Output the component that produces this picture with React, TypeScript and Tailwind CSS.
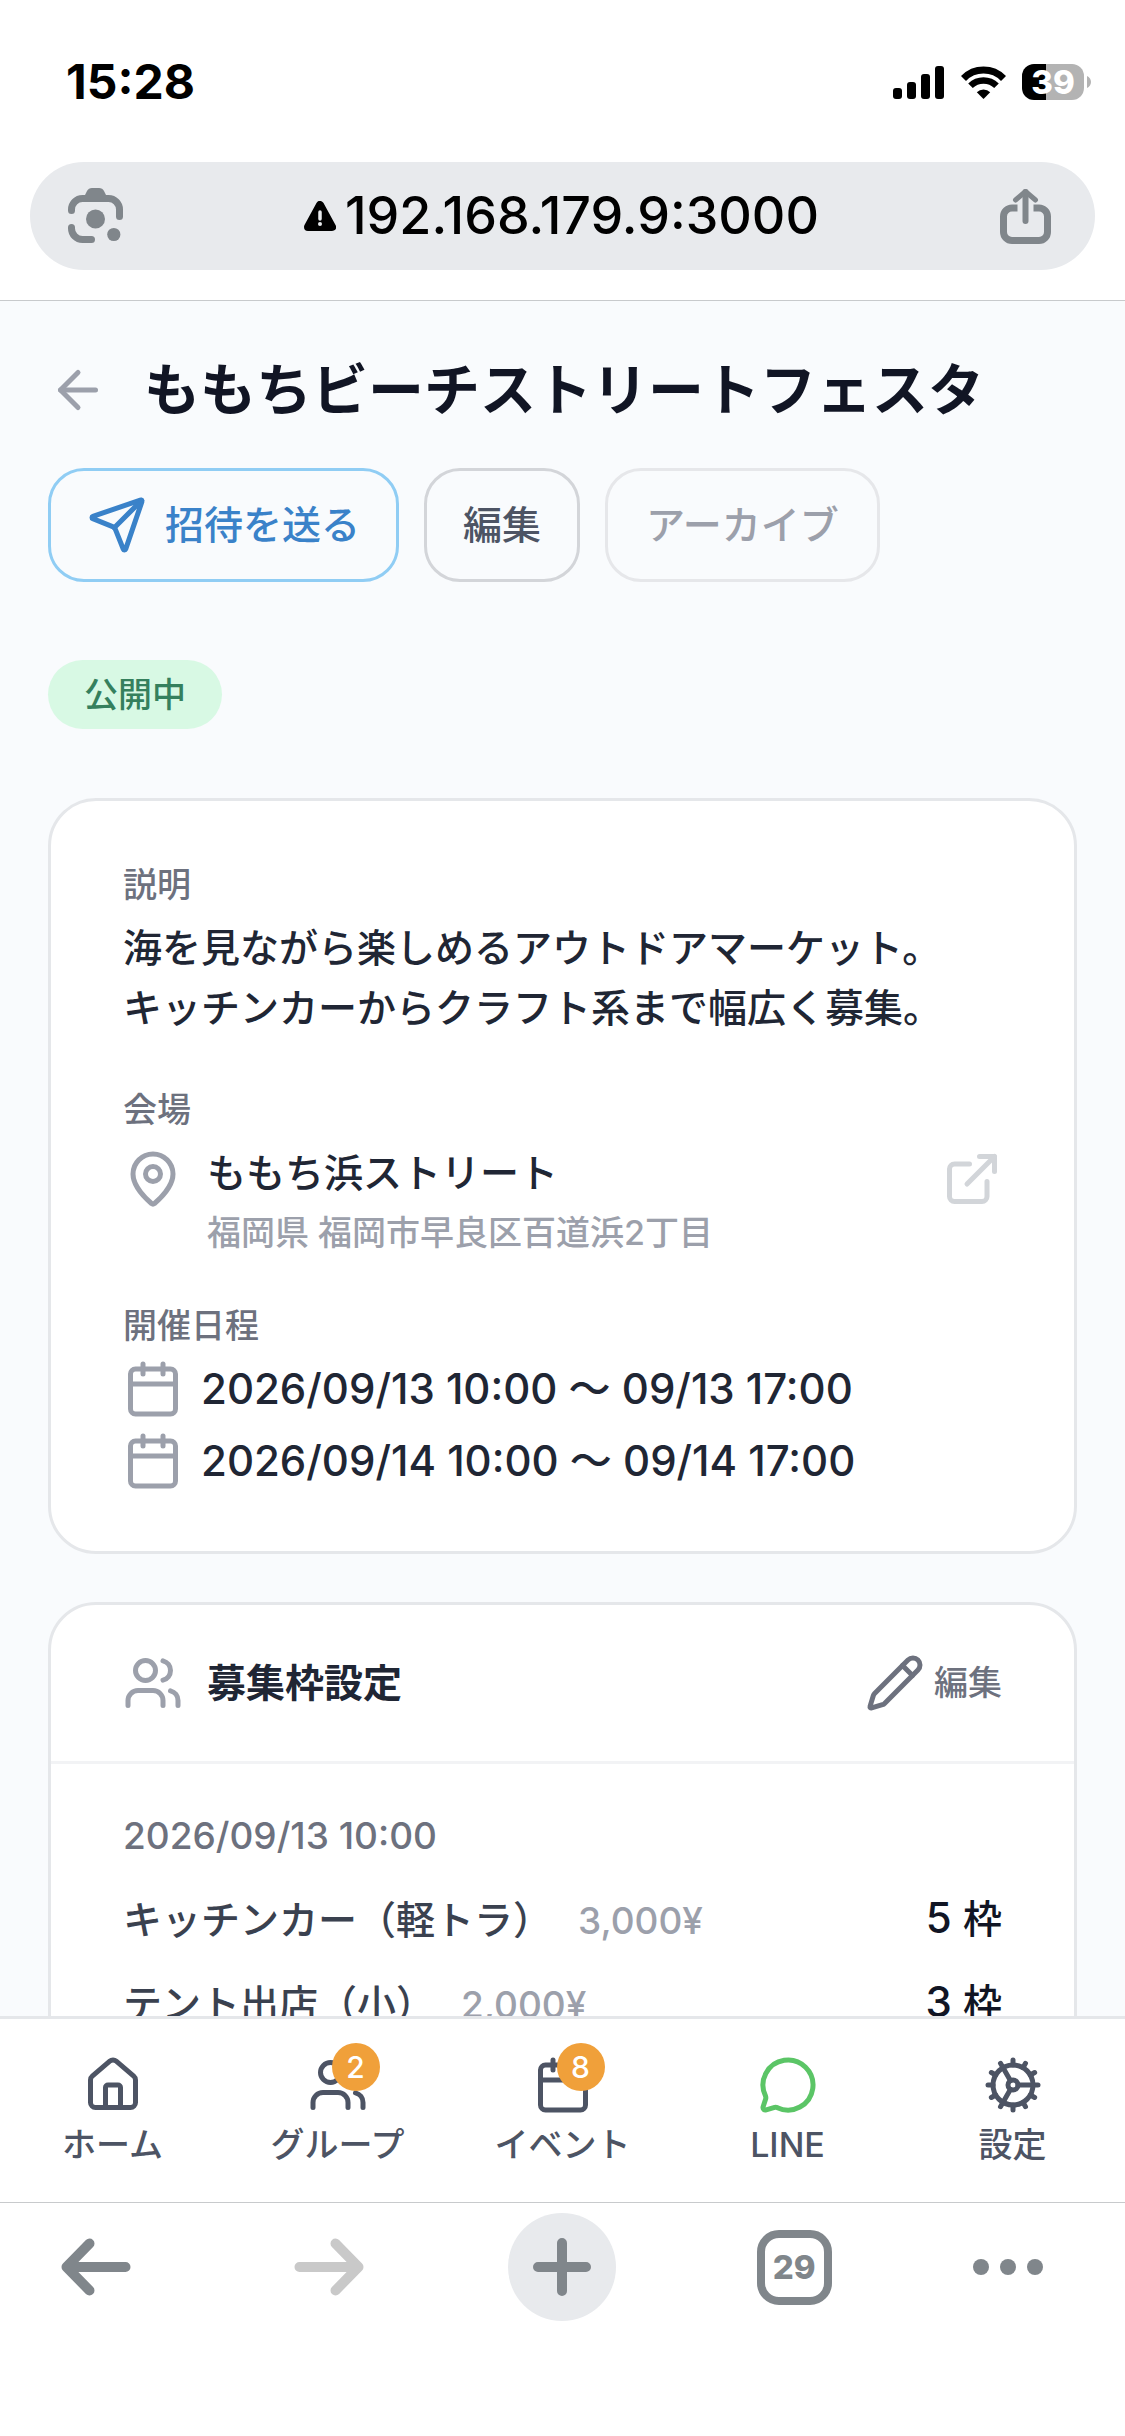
import { useState } from 'react';
import {
  ArrowLeft,
  Calendar,
  Cog,
  ExternalLink,
  House,
  MapPin,
  MessageCircle,
  Pencil,
  Send,
  Users,
  type LucideIcon,
} from 'lucide-react';

type NavItem = {
  id: string;
  label: string;
  icon: LucideIcon;
  badge?: number;
  iconClass?: string;
};

const NAV_ITEMS: NavItem[] = [
  { id: 'home', label: 'ホーム', icon: House },
  { id: 'groups', label: 'グループ', icon: Users, badge: 2 },
  { id: 'events', label: 'イベント', icon: Calendar, badge: 8 },
  { id: 'line', label: 'LINE', icon: MessageCircle, iconClass: 'text-[#5bc566]' },
  { id: 'settings', label: '設定', icon: Cog },
];

const SCHEDULES = ['2026/09/13 10:00 〜 09/13 17:00', '2026/09/14 10:00 〜 09/14 17:00'];

const SLOTS = [
  { name: 'キッチンカー（軽トラ）', price: '3,000¥', count: 5 },
  { name: 'テント出店（小）', price: '2,000¥', count: 3 },
];

function StatusBar() {
  return (
    <div className="flex h-[162px] items-center justify-between pt-[2px] pr-[34px] pl-[66px]">
      <span className="text-[48px] leading-[60px] font-bold">15:28</span>
      <div className="flex items-center">
        <svg className="h-[33px] w-[51px]" viewBox="0 0 51 33" fill="currentColor">
          <rect x="0" y="22" width="9" height="11" rx="3" />
          <rect x="14" y="16" width="9" height="17" rx="3" />
          <rect x="28" y="8" width="9" height="25" rx="3" />
          <rect x="42" y="0" width="9" height="33" rx="3" />
        </svg>
        <svg className="ml-[17px] h-[33px] w-[45px]" viewBox="0 0 45 33" fill="none" stroke="currentColor">
          <path d="M2.5 12.5A28 28 0 0 1 42.5 12.5" strokeWidth="7" />
          <path d="M9.5 19.8A18.5 18.5 0 0 1 35.5 19.8" strokeWidth="6.5" />
          <path d="M22.5 33L15.8 26.2A10 10 0 0 1 29.2 26.2Z" fill="currentColor" stroke="none" />
        </svg>
        <div className="ml-4 flex h-9 w-[62px] items-center justify-center rounded-[12px] bg-linear-to-r from-black from-39% to-[#b3b3b3] to-39% text-[33px] leading-9 font-extrabold text-white">
          39
        </div>
        <svg className="ml-[3px] h-3 w-1" viewBox="0 0 4 12" fill="#b3b3b3">
          <path d="M0 0c2.5 1 4 3.5 4 6s-1.5 5-4 6z" />
        </svg>
      </div>
    </div>
  );
}

function LensIcon() {
  return (
    <svg className="h-14 w-[55px]" viewBox="0 0 55 56" fill="none" stroke="currentColor" strokeWidth="7" strokeLinecap="round">
      <path d="M3.5 22.5v-1A11 11 0 0 1 14.5 10.5H40.5A11 11 0 0 1 51.5 21.5V28.5" />
      <path d="M3.5 39.5v1A11 11 0 0 0 14.5 51.5H23.5" />
      <path d="M16 9L19 3Q20.5 0 24 0H31Q34.5 0 36 3L39 9Z" fill="currentColor" stroke="none" />
      <circle cx="27.5" cy="31" r="9.5" fill="currentColor" stroke="none" />
      <circle cx="45.8" cy="46.5" r="6.6" fill="currentColor" stroke="none" />
    </svg>
  );
}

function ShareIcon() {
  return (
    <svg className="h-14 w-[51px]" viewBox="0 0 51 56" fill="none" stroke="currentColor" strokeWidth="7">
      <path d="M17.5 20H12A8.5 8.5 0 0 0 3.5 28.5V44A8.5 8.5 0 0 0 12 52.5H39A8.5 8.5 0 0 0 47.5 44V28.5A8.5 8.5 0 0 0 39 20H33.5" />
      <path d="M25.5 4V33" strokeWidth="6" strokeLinecap="round" />
      <path d="M15.5 12L25.5 3.5L35.5 12" strokeWidth="5" strokeLinecap="round" strokeLinejoin="round" />
    </svg>
  );
}

function AddressBar() {
  return (
    <div className="mx-[30px] mb-[30px] flex h-[108px] items-center justify-between rounded-full bg-[#e8eaed] pr-11 pl-[38px]">
      <button type="button" aria-label="画像検索" className="text-[#80868b]">
        <LensIcon />
      </button>
      <button type="button" className="flex items-center gap-[9px] text-[52px] leading-[60px] font-medium">
        <svg className="h-[30px] w-8" viewBox="0 0 32 30">
          <path d="M16 4L28 26H4Z" fill="#000" stroke="#000" strokeWidth="8" strokeLinejoin="round" />
          <path d="M16 11v7" stroke="#e8eaed" strokeWidth="3.5" strokeLinecap="round" />
          <circle cx="16" cy="23" r="2" fill="#e8eaed" />
        </svg>
        192.168.179.9:3000
      </button>
      <button type="button" aria-label="共有" className="text-[#80868b]">
        <ShareIcon />
      </button>
    </div>
  );
}

function EventHeader() {
  return (
    <>
      <div className="flex items-center gap-9">
        <button type="button" aria-label="戻る" className="text-[#9ca0ab]">
          <ArrowLeft size={60} />
        </button>
        <h1 className="text-[56px] leading-[80px] font-bold whitespace-nowrap text-[#111524]">
          ももちビーチストリートフェスタ
        </h1>
      </div>
      <div className="mt-[38px] flex gap-[25px] text-[39px] leading-[60px] font-medium">
        <button
          type="button"
          className="flex h-[114px] items-center gap-[18px] rounded-[36px] border-3 border-[#90cdf4] px-9 text-[#3a82c9]"
        >
          <Send size={60} />
          招待を送る
        </button>
        <button type="button" className="h-[114px] rounded-[36px] border-3 border-[#d3d5d9] px-9 text-[#4d5464]">
          編集
        </button>
        <button type="button" className="h-[114px] rounded-[36px] border-3 border-[#e6e7ea] px-[38px] text-[#9ca0ab]">
          アーカイブ
        </button>
      </div>
    </>
  );
}

function SectionLabel({ children }: { children: string }) {
  return <h2 className="mb-[9px] text-[34px] leading-12 font-medium text-[#6d717e]">{children}</h2>;
}

function EventDetails() {
  return (
    <section className="mt-[69px] flex flex-col gap-12 rounded-[48px] border-3 border-[#e5e7ea] bg-white px-[72px] py-[60px] text-[39px] leading-[60px] font-medium text-[#202634]">
      <div>
        <SectionLabel>説明</SectionLabel>
        <p>
          海を見ながら楽しめるアウトドアマーケット。
          <br />
          キッチンカーからクラフト系まで幅広く募集。
        </p>
      </div>
      <div>
        <SectionLabel>会場</SectionLabel>
        <div className="flex items-start gap-6">
          <MapPin size={60} className="mt-[6px] shrink-0 text-[#9ca0ab]" />
          <div className="flex-1">
            <p>ももち浜ストリート</p>
            <p className="mt-[9px] text-[34px] leading-[42px] text-[#9ca0ab]">福岡県 福岡市早良区百道浜2丁目</p>
          </div>
          <a href="#map" aria-label="地図を開く" className="mt-[6px] text-[#d2d5d9]">
            <ExternalLink size={60} />
          </a>
        </div>
      </div>
      <div>
        <SectionLabel>開催日程</SectionLabel>
        <ul className="flex flex-col gap-3 text-[42px]">
          {SCHEDULES.map((schedule) => (
            <li key={schedule} className="flex items-center gap-[18px]">
              <Calendar size={60} className="text-[#9ca0ab]" />
              {schedule}
            </li>
          ))}
        </ul>
      </div>
    </section>
  );
}

function SlotSettings() {
  return (
    <section className="mt-12 rounded-[48px] border-3 border-[#e5e7ea] bg-white">
      <div className="flex items-center justify-between border-b-3 border-[#f2f3f5] px-[72px] py-12">
        <h2 className="flex items-center gap-6 text-[39px] leading-[60px] font-bold text-[#202634]">
          <Users size={60} className="text-[#9ca0ab]" />
          募集枠設定
        </h2>
        <button type="button" className="flex items-center gap-[9px] text-[34px] leading-[60px] font-medium text-[#6d717e]">
          <Pencil size={60} />
          編集
        </button>
      </div>
      <div className="px-[72px] py-12">
        <h3 className="text-[37px] leading-12 font-medium text-[#6d717e]">2026/09/13 10:00</h3>
        <ul className="mt-7 flex flex-col gap-6 font-medium">
          {SLOTS.map((slot) => (
            <li key={slot.name} className="flex h-[60px] items-start justify-between leading-[60px]">
              <p className="flex items-baseline gap-[26px] pt-[2px]">
                <span className="text-[39px] text-[#3a414f]">{slot.name}</span>
                <span className="text-[37px] text-[#9ca0ab]">{slot.price}</span>
              </p>
              <p className="text-[42px] text-[#111524]">
                {slot.count} <span className="text-[39px]">枠</span>
              </p>
            </li>
          ))}
        </ul>
      </div>
    </section>
  );
}

function BottomNav() {
  const [active, setActive] = useState('events');

  return (
    <nav className="grid grid-cols-5 border-t-3 border-[#e5e7ea] bg-white pt-9 pb-[33px]">
      {NAV_ITEMS.map(({ id, label, icon: Icon, badge, iconClass }) => (
        <button
          key={id}
          type="button"
          aria-current={active === id ? 'page' : undefined}
          onClick={() => setActive(id)}
          className="flex flex-col items-center gap-[6px] text-[34px] leading-12 font-medium text-[#4d5464]"
        >
          <span className="relative">
            <Icon size={60} className={iconClass} />
            {badge && (
              <span className="absolute -top-3 -right-3 flex size-12 items-center justify-center rounded-full bg-[#f0a03a] text-[30px] leading-none text-white">
                {badge}
              </span>
            )}
          </span>
          {label}
        </button>
      ))}
    </nav>
  );
}

function BrowserToolbar() {
  return (
    <footer className="flex h-[234px] items-start justify-between border-t border-[#c8cacc] bg-white pt-[10px] pr-[82px] pl-[42px] text-[#80868b]">
      <button type="button" aria-label="前のページ" className="flex h-[108px] w-[108px] items-center justify-center">
        <svg className="h-[58px] w-[70px]" viewBox="0 0 70 58" fill="none" stroke="currentColor" strokeWidth="10" strokeLinecap="round" strokeLinejoin="round">
          <path d="M64.5 29H7M28.5 5.5L5.5 29L28.5 52.5" />
        </svg>
      </button>
      <button type="button" aria-label="次のページ" className="flex h-[108px] w-[108px] items-center justify-center text-[#c9c9c9]">
        <svg className="h-[58px] w-[70px]" viewBox="0 0 70 58" fill="none" stroke="currentColor" strokeWidth="10" strokeLinecap="round" strokeLinejoin="round">
          <path d="M5.5 29H63M41.5 5.5L64.5 29L41.5 52.5" />
        </svg>
      </button>
      <button type="button" aria-label="新しいタブ" className="flex h-[108px] w-[108px] items-center justify-center rounded-full bg-[#e8eaed]">
        <svg className="size-[58px]" viewBox="0 0 58 58" stroke="currentColor" strokeWidth="10" strokeLinecap="round">
          <path d="M29 5V53M5 29H53" />
        </svg>
      </button>
      <button type="button" aria-label="タブ一覧" className="flex h-[108px] w-[108px] items-center justify-center">
        <span className="flex size-[75px] items-center justify-center rounded-[22px] border-8 border-current text-[33px] leading-none font-extrabold">
          29
        </span>
      </button>
      <button type="button" aria-label="メニュー" className="flex h-[108px] w-[70px] items-center justify-between">
        <span className="size-4 rounded-full bg-current" />
        <span className="size-4 rounded-full bg-current" />
        <span className="size-4 rounded-full bg-current" />
      </button>
    </footer>
  );
}

export default function App() {
  return (
    <div
      lang="ja"
      className="flex h-screen flex-col bg-white font-['Inter','Noto_Sans_CJK_JP',sans-serif] text-black"
    >
      <header className="border-b border-[#c8cacc]">
        <StatusBar />
        <AddressBar />
      </header>
      <main className="min-h-0 flex-1 overflow-y-auto bg-[#f9fbfd] px-12 pt-[49px] pb-12 [scrollbar-width:none]">
        <EventHeader />
        <div className="mt-[78px] flex">
          <span className="rounded-full bg-[#d8f9e4] px-9 py-[10px] text-[34px] leading-[49px] font-medium text-[#35805d]">
            公開中
          </span>
        </div>
        <EventDetails />
        <SlotSettings />
      </main>
      <BottomNav />
      <BrowserToolbar />
    </div>
  );
}
